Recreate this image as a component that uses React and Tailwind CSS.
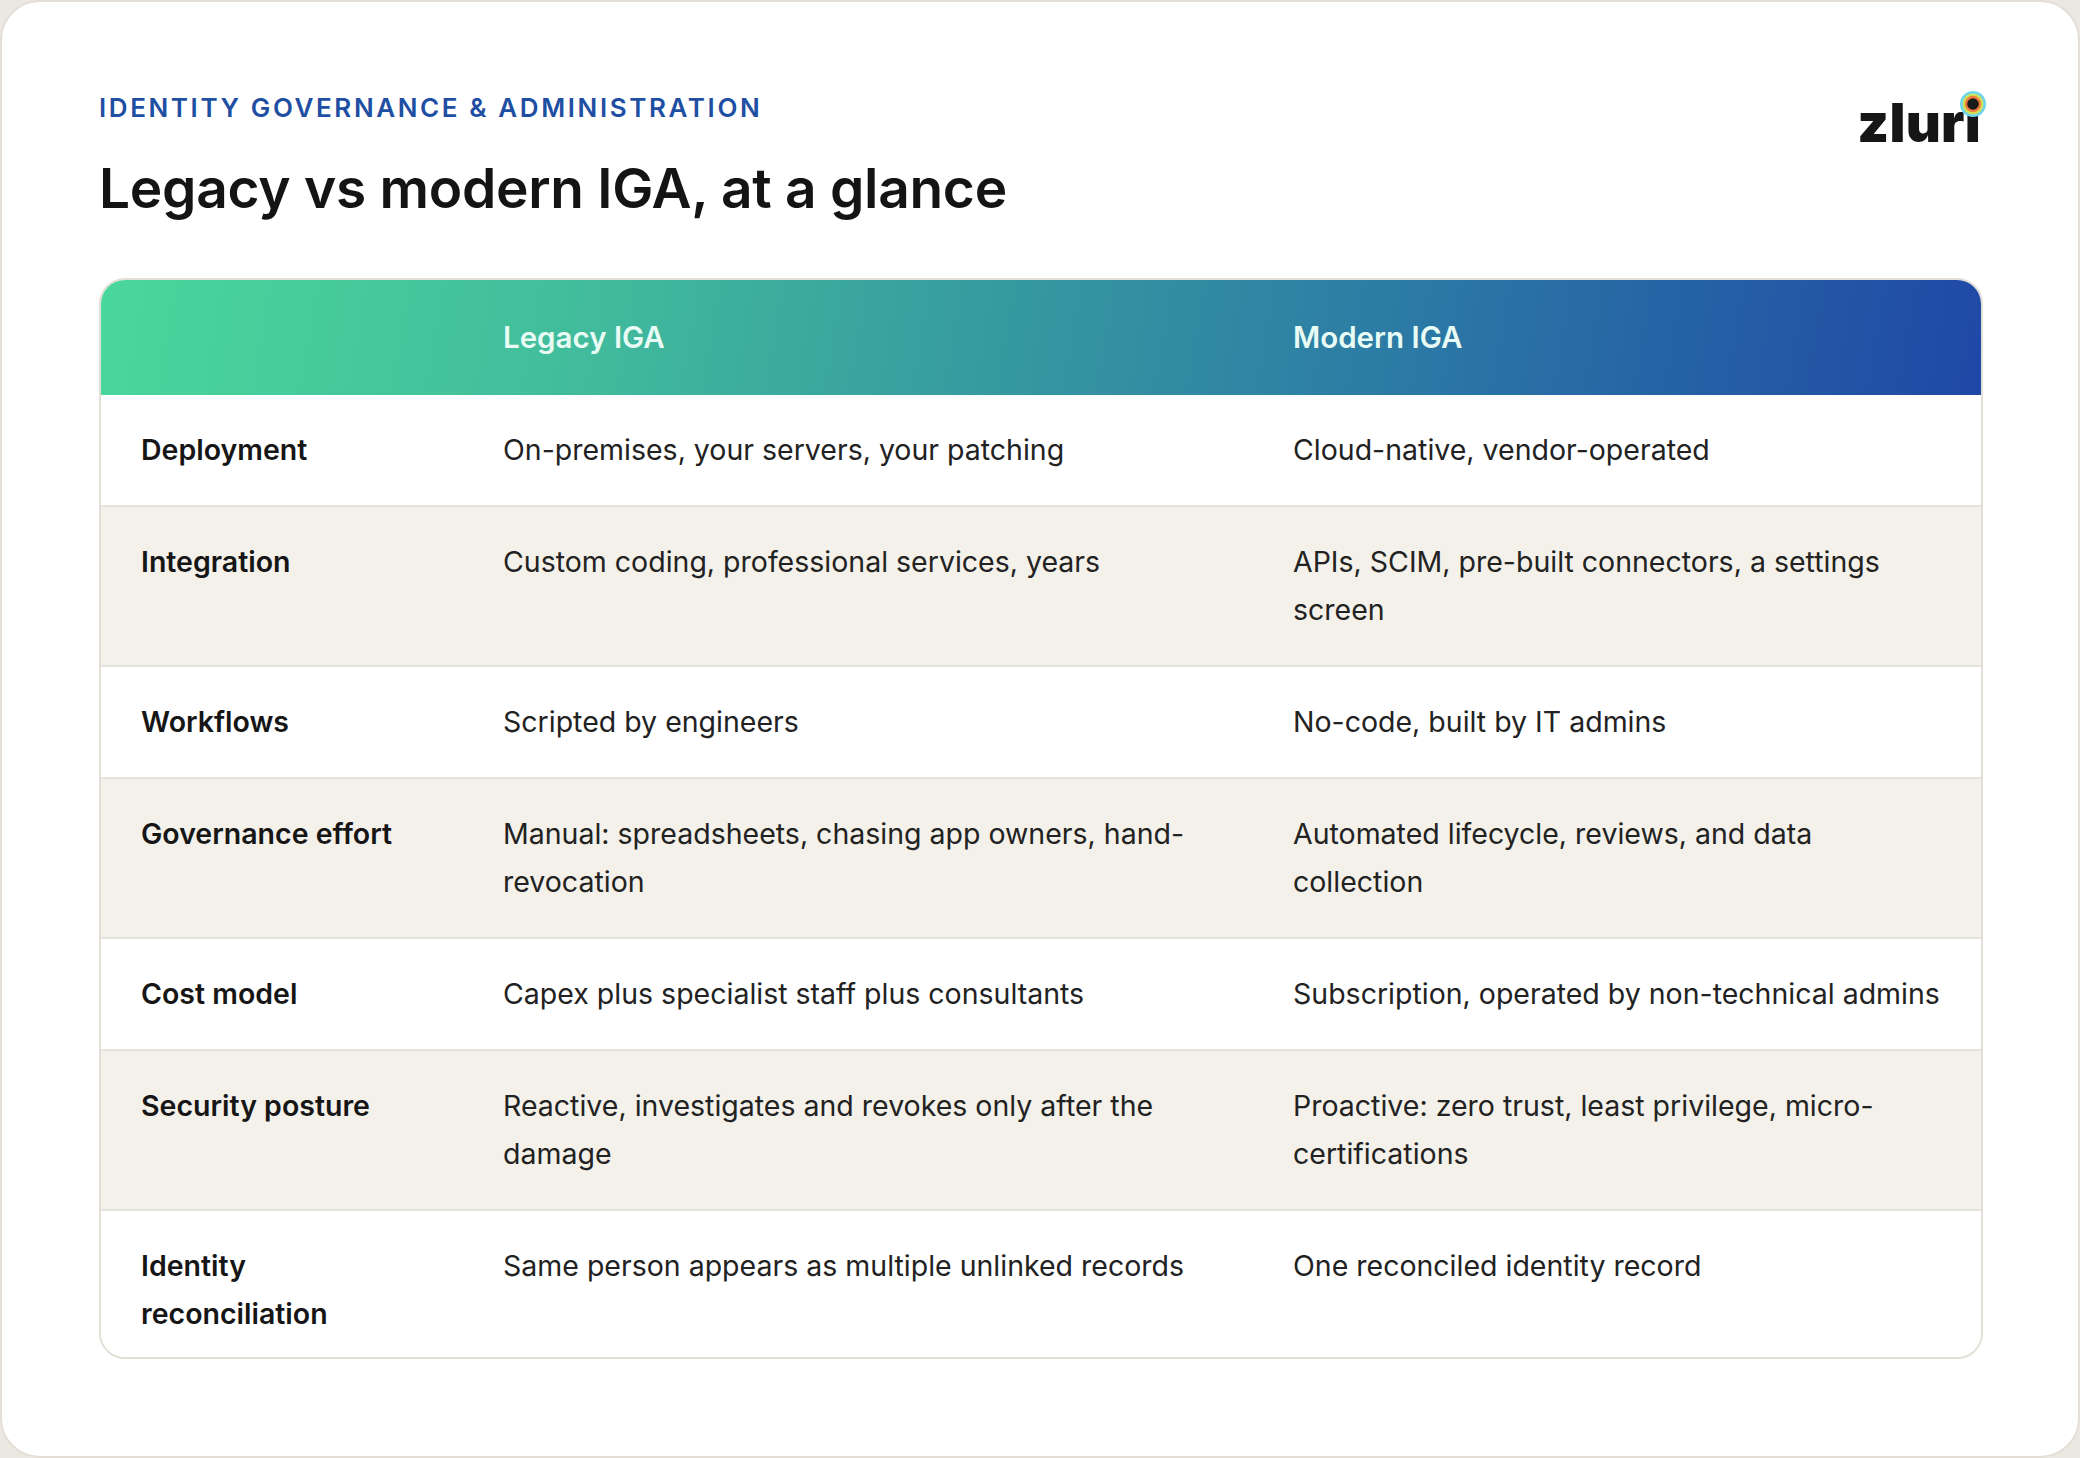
const rows = [
  {
    label: "Deployment",
    legacy: "On-premises, your servers, your patching",
    modern: "Cloud-native, vendor-operated",
  },
  {
    label: "Integration",
    legacy: "Custom coding, professional services, years",
    modern: "APIs, SCIM, pre-built connectors, a settings screen",
  },
  {
    label: "Workflows",
    legacy: "Scripted by engineers",
    modern: "No-code, built by IT admins",
  },
  {
    label: "Governance effort",
    legacy: "Manual: spreadsheets, chasing app owners, hand-revocation",
    modern: "Automated lifecycle, reviews, and data collection",
  },
  {
    label: "Cost model",
    legacy: "Capex plus specialist staff plus consultants",
    modern: "Subscription, operated by non-technical admins",
  },
  {
    label: "Security posture",
    legacy: "Reactive, investigates and revokes only after the damage",
    modern: "Proactive: zero trust, least privilege, micro-certifications",
  },
  {
    label: "Identity reconciliation",
    legacy: "Same person appears as multiple unlinked records",
    modern: "One reconciled identity record",
  },
];

function Logo() {
  return (
    <div className="mr-[2px] mt-[4px] text-[54px] font-black leading-[54px] tracking-[0.005em] text-[#161616]">
      zlur
      <span className="relative inline-block">
        ı
        <svg
          className="absolute left-1/2 top-[-5px] h-[26px] w-[26px] -translate-x-1/2"
          viewBox="0 0 26 26"
        >
          <circle cx="13" cy="13" r="13" fill="#6fd6ef" />
          <circle cx="13" cy="13" r="10.5" fill="#cfe05a" />
          <circle cx="13" cy="13" r="8.2" fill="#f07a3c" />
          <circle cx="13" cy="13" r="5.8" fill="#1a1a1a" />
        </svg>
      </span>
    </div>
  );
}

export default function App() {
  return (
    <div
      className="h-[1458px] w-[2080px] bg-[#ebe8e1]"
      style={{ fontFamily: "Inter, 'Noto Sans', sans-serif" }}
    >
      <div className="h-full rounded-[40px] border-2 border-[#e3dfd6] bg-white pl-[97px] pr-[95px] pt-[90px]">
        <div className="flex items-start justify-between">
          <div>
            <p className="text-[26px] font-semibold leading-[32px] tracking-[0.1em] text-[#1f4fa3]">
              IDENTITY GOVERNANCE &amp; ADMINISTRATION
            </p>
            <h1 className="mt-[32px] text-[55px] font-semibold leading-[64px] tracking-[-0.005em] text-[#141414]">
              Legacy vs modern IGA, at a glance
            </h1>
          </div>
          <Logo />
        </div>

        <div className="mt-[58px] overflow-hidden rounded-[26px] border-2 border-[#e3dfd6]">
          <div className="grid h-[115px] grid-cols-[362px_790px_1fr] items-center bg-[linear-gradient(100deg,#4ad79b_0%,#42bd9c_25%,#3596a0_50%,#2c7ca5_68%,#1f48a6_100%)] text-[29.5px] font-semibold text-[#e8fbf4]">
            <div />
            <div className="px-[40px]">Legacy IGA</div>
            <div className="px-[40px]">Modern IGA</div>
          </div>

          {rows.map((row, i) => (
            <div
              key={row.label}
              className={`grid grid-cols-[362px_790px_1fr] text-[28.5px] leading-[48px] text-[#222222] ${
                i % 2 === 1 ? "bg-[#f3f1ea]" : "bg-white"
              } ${i > 0 ? "border-t-2 border-[#e5e2db]" : ""} ${
                i === rows.length - 1 ? "pb-[19px] pt-[31px]" : "py-[31px]"
              }`}
            >
              <div className="px-[40px] font-semibold text-[#161616]">
                {row.label}
              </div>
              <div className="px-[40px]">{row.legacy}</div>
              <div className="pl-[40px] pr-[35px]">{row.modern}</div>
            </div>
          ))}
        </div>
      </div>
    </div>
  );
}
